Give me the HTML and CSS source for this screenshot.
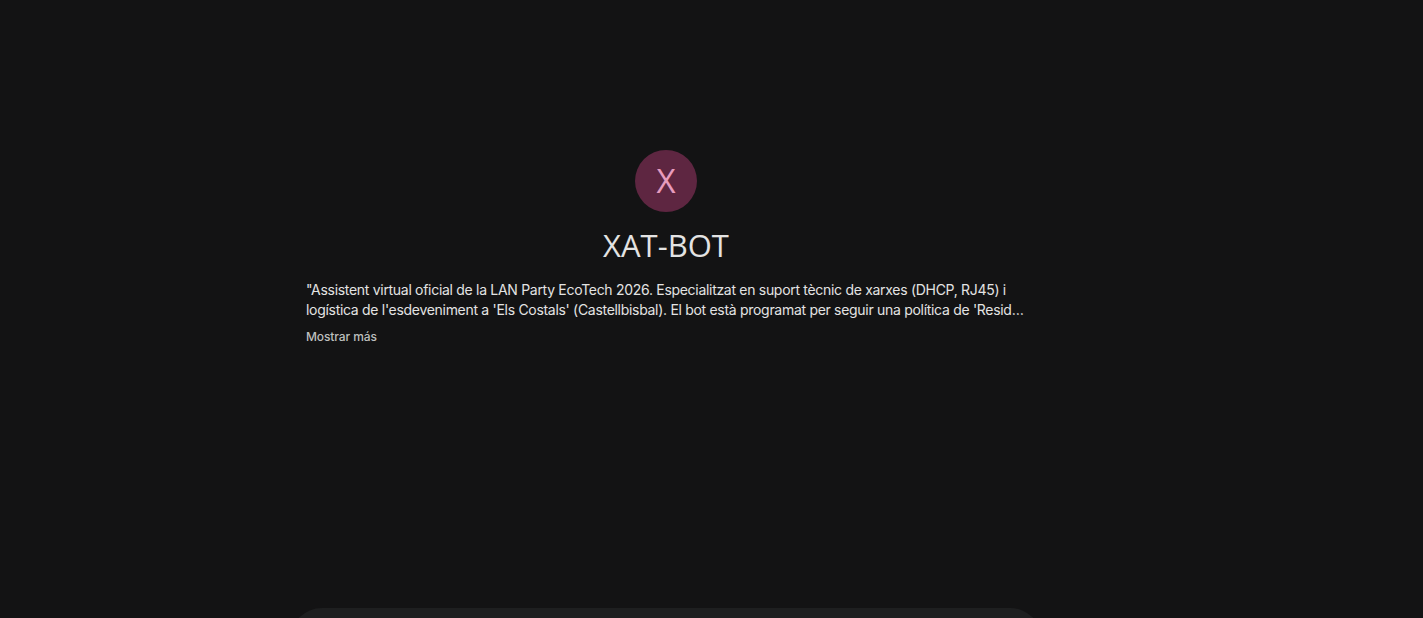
FILE: index.html
```html
<!DOCTYPE html>
<html lang="ca">
<head>
    <meta charset="UTF-8">
    <title>XAT-BOT</title>
    <link rel="stylesheet" href="styles.css">
</head>
<body>
<div class="app">
    <main class="chat">
        <div class="intro">
            <div class="avatar">X</div>
            <h1 class="bot-name">XAT-BOT</h1>
            <div class="about">
                <p class="description">"Assistent virtual oficial de la LAN Party EcoTech 2026. Especialitzat en suport tècnic de xarxes (DHCP, RJ45) i logística de l'esdeveniment a 'Els Costals' (Castellbisbal). El bot està programat per seguir una política de 'Residu Zero' i recordar als assistents les normes de sostenibilitat de l'esdeveniment."</p>
                <div class="show-more">Mostrar más</div>
            </div>
        </div>

        <div class="composer">
            <div class="input-box"></div>
        </div>
    </main>
    <aside class="side"></aside>
</div>
</body>
</html>
```

FILE: styles.css
```css
html, body {
    margin: 0;
    padding: 0;
    height: 100%;
    background-color: #131314;
    color: #e3e3e3;
    font-family: Inter, "Noto Sans", sans-serif;
    overflow: hidden;
}
.app {
    display: flex;
    height: 100%;
}
.chat {
    flex: 1;
    display: flex;
    flex-direction: column;
    align-items: center;
    overflow: hidden;
}
.side {
    width: 91px;
}
.intro {
    width: 720px;
    padding-top: 150px;
    display: flex;
    flex-direction: column;
    align-items: center;
}
.avatar {
    width: 62px;
    height: 62px;
    border-radius: 50%;
    background-color: #5e2641;
    color: #e79bbd;
    font-family: "Open Sans", sans-serif;
    font-weight: 500;
    font-size: 33px;
    line-height: 62px;
    text-align: center;
}
.bot-name {
    margin: 13px 0 15px;
    font-family: "Open Sans", sans-serif;
    font-weight: 400;
    font-size: 31px;
    line-height: 40px;
    color: #e3e3e3;
}
.about {
    align-self: stretch;
}
.description {
    margin: 0;
    font-size: 14px;
    letter-spacing: -0.3px;
    line-height: 20px;
    color: #e3e3e3;
    display: -webkit-box;
    -webkit-line-clamp: 2;
    -webkit-box-orient: vertical;
    overflow: hidden;
}
.show-more {
    margin-top: 9px;
    font-size: 12px;
    font-weight: 500;
    letter-spacing: -0.1px;
    line-height: 16px;
    color: #bdbfbe;
    cursor: pointer;
}
.composer {
    margin-top: auto;
    width: 752px;
    height: 10px;
    flex-shrink: 0;
}
.input-box {
    height: 64px;
    border-radius: 32px;
    background-color: #1e1f20;
}
```
